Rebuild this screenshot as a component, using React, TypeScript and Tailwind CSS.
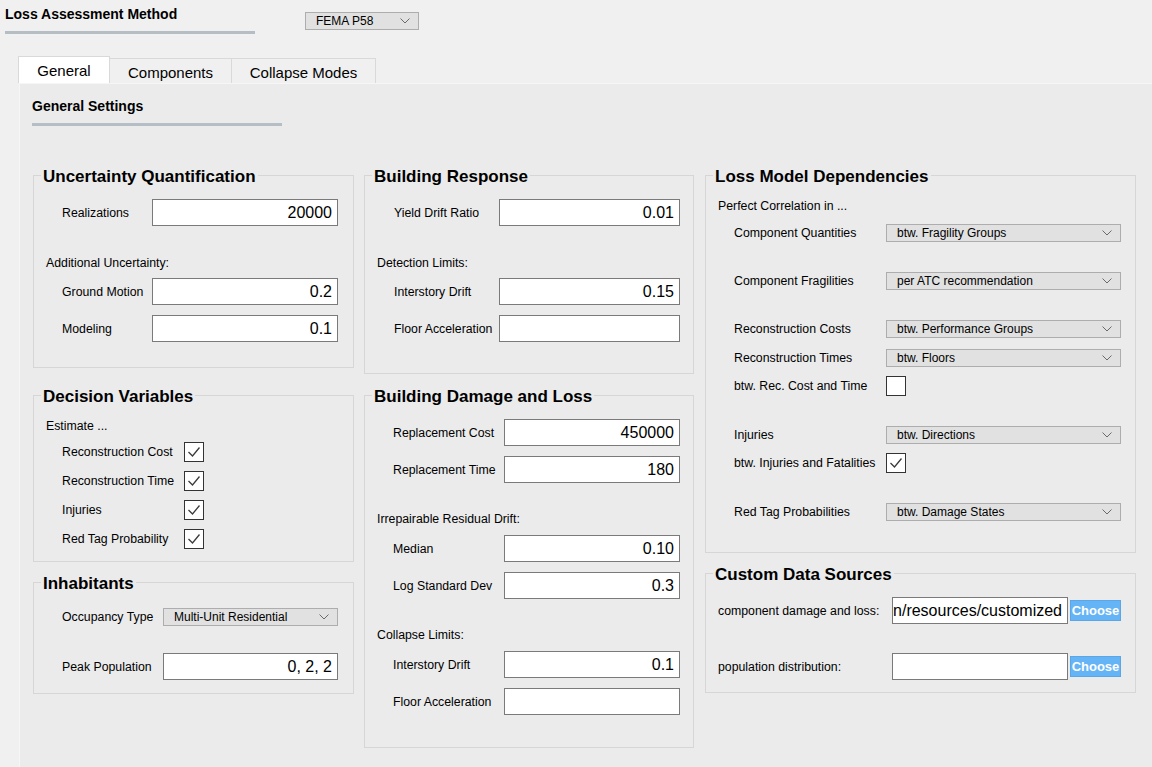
import React from 'react';

// --- small widgets ---
const Chevron = () => (
    <svg width="10" height="6" viewBox="0 0 10 6" className="shrink-0">
        <path d="M0.5 0.5 L5 5 L9.5 0.5" fill="none" stroke="#6a6a6a" strokeWidth="1" />
    </svg>
);

const Field: React.FC<{ value?: string; className?: string }> = ({ value = '', className = '' }) => (
    <div className={`h-[27px] shrink-0 bg-white border border-[#7a7a7a] flex items-center justify-end pr-[5px] text-[16px] leading-[20px] text-black overflow-hidden whitespace-nowrap ${className}`}>
        <span className="shrink-0">{value}</span>
    </div>
);

const Combo: React.FC<{ value: string; className?: string }> = ({ value, className = '' }) => (
    <div className={`h-[18px] shrink-0 bg-[#e1e1e1] border border-[#adadad] flex items-center justify-between pl-[10px] pr-[8px] text-[12px] leading-[14px] text-black ${className}`}>
        <span>{value}</span>
        <Chevron />
    </div>
);

const Check: React.FC<{ checked?: boolean }> = ({ checked }) => (
    <div className="w-[20px] h-[20px] shrink-0 bg-white border border-[#333333] flex items-center justify-center">
        {checked && (
            <svg width="14" height="12" viewBox="0 0 14 12">
                <path d="M1.5 6 L5.5 10 L12.5 1.5" fill="none" stroke="#3a3a3a" strokeWidth="1.3" />
            </svg>
        )}
    </div>
);

const ChooseButton = () => (
    <div className="ml-[2px] w-[51px] h-[21px] shrink-0 bg-[#64b4f6] border border-[#5aa6e6] flex items-center justify-center text-white text-[13px] font-bold leading-[15px]">
        Choose
    </div>
);

// group box: legend is 20px tall, the border runs through its middle
const Group: React.FC<{ title: string; className?: string; children?: React.ReactNode }> = ({ title, className = '', children }) => (
    <fieldset className={`border border-[#d6d6d6] ${className}`}>
        <legend className="ml-[7px] px-[2px] pt-[4px] text-[17px] leading-[16px] font-bold text-black">{title}</legend>
        {children}
    </fieldset>
);

const Row: React.FC<{ label: string; labelClass: string; className?: string; children?: React.ReactNode }> = ({ label, labelClass, className = '', children }) => (
    <div className={`flex items-center ${className}`}>
        <span className={`shrink-0 text-[12.3px] leading-[16px] text-black ${labelClass}`}>{label}</span>
        {children}
    </div>
);

const Caption: React.FC<{ text: string; className?: string }> = ({ text, className = '' }) => (
    <div className={`h-[16px] text-[12.3px] leading-[16px] text-black ${className}`}>{text}</div>
);

const Tab: React.FC<{ label: string; active?: boolean; className?: string }> = ({ label, active, className = '' }) => (
    <div className={`flex items-center justify-center text-[15px] leading-[20px] text-black border-t border-l border-r border-[#d9d9d9] ${active ? 'h-[27px] bg-white pt-[1px]' : 'h-[25px] bg-[#f0f0f0] pt-[3px]'} ${className}`}>
        {label}
    </div>
);

export default function App() {
    return (
        <div className="w-[1152px] h-[767px] bg-[#f0f0f0] overflow-hidden font-['Liberation_Sans',Arial,sans-serif] text-black">
            {/* top header */}
            <div className="flex items-start h-[56px]">
                <div className="ml-[5px] w-[250px] pt-[6px]">
                    <div className="h-[17px] text-[14px] leading-[17px] font-bold">Loss Assessment Method</div>
                    <div className="mt-[8px] h-[3px] bg-[#b5bec4]" />
                </div>
                <Combo value="FEMA P58" className="ml-[50px] mt-[12px] w-[114px]" />
            </div>

            {/* tabs */}
            <div className="flex items-end ml-[18px] h-[27px]">
                <Tab label="General" active className="w-[92px]" />
                <Tab label="Components" className="w-[122px] border-l-0" />
                <Tab label="Collapse Modes" className="w-[144px] border-l-0" />
            </div>

            {/* tab panel */}
            <div className="ml-[19px] h-[684px] bg-[#ebebeb] border-t border-l border-[#f6f6f6]">
                <div className="ml-[12px] w-[250px] pt-[14px]">
                    <div className="h-[17px] text-[14px] leading-[17px] font-bold">General Settings</div>
                    <div className="mt-[8px] h-[3px] bg-[#b5bec4]" />
                </div>

                <div className="flex items-start mt-[39px]">
                    {/* column 1 */}
                    <div className="ml-[13px] w-[321px] flex flex-col">
                        <Group title="Uncertainty Quantification" className="h-[203px]">
                            <Row label="Realizations" labelClass="pl-[28px] w-[118px]" className="mt-[14px]">
                                <Field value="20000" className="w-[186px]" />
                            </Row>
                            <Caption text="Additional Uncertainty:" className="mt-[29px] pl-[12px]" />
                            <Row label="Ground Motion" labelClass="pl-[28px] w-[118px]" className="mt-[7px]">
                                <Field value="0.2" className="w-[186px]" />
                            </Row>
                            <Row label="Modeling" labelClass="pl-[28px] w-[118px]" className="mt-[10px]">
                                <Field value="0.1" className="w-[186px]" />
                            </Row>
                        </Group>

                        <Group title="Decision Variables" className="mt-[17px] h-[177px]">
                            <Caption text="Estimate ..." className="mt-[13px] pl-[12px]" />
                            {['Reconstruction Cost', 'Reconstruction Time', 'Injuries', 'Red Tag Probability'].map((l, i) => (
                                <Row key={l} label={l} labelClass="pl-[28px] w-[150px]" className={i === 0 ? 'mt-[8px]' : 'mt-[9px]'}>
                                    <Check checked />
                                </Row>
                            ))}
                        </Group>

                        <Group title="Inhabitants" className="mt-[10px] h-[122px]">
                            <Row label="Occupancy Type" labelClass="pl-[28px] w-[129px]" className="mt-[16px]">
                                <Combo value="Multi-Unit Residential" className="w-[175px]" />
                            </Row>
                            <Row label="Peak Population" labelClass="pl-[28px] w-[129px]" className="mt-[27px]">
                                <Field value="0, 2, 2" className="w-[175px]" />
                            </Row>
                        </Group>
                    </div>

                    {/* column 2 */}
                    <div className="ml-[10px] w-[330px] flex flex-col">
                        <Group title="Building Response" className="h-[209px]">
                            <Row label="Yield Drift Ratio" labelClass="pl-[29px] w-[134px]" className="mt-[14px]">
                                <Field value="0.01" className="w-[181px]" />
                            </Row>
                            <Caption text="Detection Limits:" className="mt-[29px] pl-[12px]" />
                            <Row label="Interstory Drift" labelClass="pl-[29px] w-[134px]" className="mt-[7px]">
                                <Field value="0.15" className="w-[181px]" />
                            </Row>
                            <Row label="Floor Acceleration" labelClass="pl-[29px] w-[134px]" className="mt-[10px]">
                                <Field className="w-[181px]" />
                            </Row>
                        </Group>

                        <Group title="Building Damage and Loss" className="mt-[11px] h-[363px]">
                            <Row label="Replacement Cost" labelClass="pl-[28px] w-[139px]" className="mt-[14px]">
                                <Field value="450000" className="w-[176px]" />
                            </Row>
                            <Row label="Replacement Time" labelClass="pl-[28px] w-[139px]" className="mt-[10px]">
                                <Field value="180" className="w-[176px]" />
                            </Row>
                            <Caption text="Irrepairable Residual Drift:" className="mt-[28px] pl-[12px]" />
                            <Row label="Median" labelClass="pl-[28px] w-[139px]" className="mt-[8px]">
                                <Field value="0.10" className="w-[176px]" />
                            </Row>
                            <Row label="Log Standard Dev" labelClass="pl-[28px] w-[139px]" className="mt-[10px]">
                                <Field value="0.3" className="w-[176px]" />
                            </Row>
                            <Caption text="Collapse Limits:" className="mt-[28px] pl-[12px]" />
                            <Row label="Interstory Drift" labelClass="pl-[28px] w-[139px]" className="mt-[8px]">
                                <Field value="0.1" className="w-[176px]" />
                            </Row>
                            <Row label="Floor Acceleration" labelClass="pl-[28px] w-[139px]" className="mt-[10px]">
                                <Field className="w-[176px]" />
                            </Row>
                        </Group>
                    </div>

                    {/* column 3 */}
                    <div className="ml-[11px] w-[431px] flex flex-col">
                        <Group title="Loss Model Dependencies" className="h-[388px]">
                            <Caption text="Perfect Correlation in ..." className="mt-[13px] pl-[12px]" />
                            <Row label="Component Quantities" labelClass="pl-[28px] w-[180px]" className="mt-[10px]">
                                <Combo value="btw. Fragility Groups" className="w-[235px]" />
                            </Row>
                            <Row label="Component Fragilities" labelClass="pl-[28px] w-[180px]" className="mt-[30px]">
                                <Combo value="per ATC recommendation" className="w-[235px]" />
                            </Row>
                            <Row label="Reconstruction Costs" labelClass="pl-[28px] w-[180px]" className="mt-[30px]">
                                <Combo value="btw. Performance Groups" className="w-[235px]" />
                            </Row>
                            <Row label="Reconstruction Times" labelClass="pl-[28px] w-[180px]" className="mt-[11px]">
                                <Combo value="btw. Floors" className="w-[235px]" />
                            </Row>
                            <Row label="btw. Rec. Cost and Time" labelClass="pl-[28px] w-[180px]" className="mt-[9px]">
                                <Check />
                            </Row>
                            <Row label="Injuries" labelClass="pl-[28px] w-[180px]" className="mt-[30px]">
                                <Combo value="btw. Directions" className="w-[235px]" />
                            </Row>
                            <Row label="btw. Injuries and Fatalities" labelClass="pl-[28px] w-[180px]" className="mt-[9px]">
                                <Check checked />
                            </Row>
                            <Row label="Red Tag Probabilities" labelClass="pl-[28px] w-[180px]" className="mt-[30px]">
                                <Combo value="btw. Damage States" className="w-[235px]" />
                            </Row>
                        </Group>

                        <Group title="Custom Data Sources" className="mt-[10px] h-[130px]">
                            <Row label="component damage and loss:" labelClass="pl-[12px] w-[186px]" className="mt-[14px]">
                                <Field value="un/resources/customized" className="w-[176px]" />
                                <ChooseButton />
                            </Row>
                            <Row label="population distribution:" labelClass="pl-[12px] w-[186px]" className="mt-[29px]">
                                <Field className="w-[176px]" />
                                <ChooseButton />
                            </Row>
                        </Group>
                    </div>
                </div>
            </div>
        </div>
    );
}
